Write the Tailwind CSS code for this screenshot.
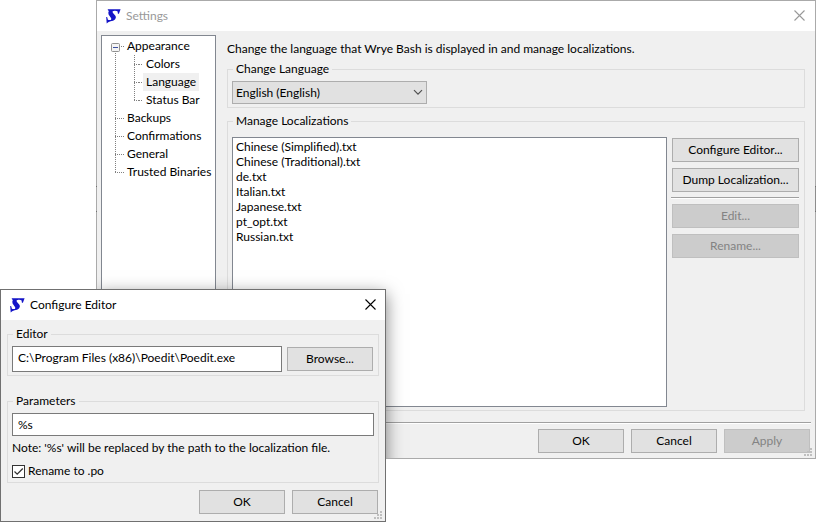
<!DOCTYPE html>
<html lang="en">
<head>
<meta charset="utf-8">
<meta name="viewport" content="width=device-width, initial-scale=1">
<title>Settings</title>
<script src="https://cdn.jsdelivr.net/npm/@tailwindcss/browser@4"></script>
</head>
<body class="bg-white text-black text-[12px] leading-4 font-['Lato','Open_Sans',sans-serif]">
<svg class="hidden" aria-hidden="true">
  <symbol id="logo" viewBox="0 0 15 15"><path fill="#1414c8" d="M1.800 .3H14.600L12.900 4.800H11.900L11.600 2.600Q10.800 1.600 8.600 1.700L6.600 2.200L6.800 3.800L9.600 7Q10.400 9 9 10.400Q7.400 11.800 4.600 12.200L2.200 13.200L.7 14.600L.2 8H1.100L1.900 10.700Q3.200 11.400 4.800 10.900Q5.800 10.300 5 9L2.600 5.600Q1.900 3.800 2.800 1.900L1.800 1.100Z"/></symbol>
  <symbol id="close" viewBox="0 0 11 11"><path fill="none" stroke="currentColor" stroke-width="1.1" d="M.5 .5L10.5 10.5M10.5 .5L.5 10.5"/></symbol>
  <symbol id="grip" viewBox="0 0 8 8"><path fill="#bfbfbf" d="M6 0h2v2h-2zM6 3h2v2h-2zM6 6h2v2h-2zM3 3h2v2h-2zM3 6h2v2h-2zM0 6h2v2h-2z"/></symbol>
</svg>
<main class="relative min-h-screen">

  <!-- Settings window -->
  <section class="relative ml-24 overflow-hidden border border-[#aaaaaa] bg-[#f0f0f0]" aria-label="Settings">
    <header class="flex h-[30px] items-center bg-white pl-[9px] pr-[10px] text-[#999999]">
      <svg class="size-[15px]" aria-hidden="true"><use href="#logo"/></svg>
      <h1 class="ml-[5px] flex-1">Settings</h1>
      <button type="button" class="pb-px" aria-label="Close settings"><svg class="block size-[11px]"><use href="#close"/></svg></button>
    </header>

    <div class="flex px-1 pt-1">
      <nav class="relative w-[115px] shrink-0 border border-[#828790] bg-white pt-px pl-[22px]" aria-label="Pages">
        <svg class="absolute left-[9px] top-[7px] h-[134px] w-[28px]" viewBox="0 0 28 134" aria-hidden="true">
          <g fill="none" stroke="#808080" stroke-dasharray="1 1">
            <path d="M4.5 10V130M4 75.500H13M4 93.500H13M4 111.500H13M4 129.500H13M10 3.500H13"/>
            <path d="M23.500 12V58M23 21.500H32M23 39.500H32M23 57.500H32"/>
          </g>
          <rect x=".5" y=".5" width="8" height="8" rx="1" fill="#f4f4f4" stroke="#919191"/>
          <path d="M2 4.500H7" stroke="#3c50a0"/>
        </svg>
        <svg class="absolute left-[37px] top-[28px] h-[38px] w-[4px]" viewBox="0 0 4 38" aria-hidden="true">
          <path d="M0 .5H4M0 18.500H4M0 36.500H4" stroke="#808080" stroke-dasharray="1 1"/>
        </svg>
        <ul class="leading-[18px] whitespace-nowrap">
          <li><a href="#appearance" class="px-[3px]">Appearance</a>
            <ul class="pl-[19px]">
              <li><a href="#colors" class="px-[3px]">Colors</a></li>
              <li class="flex"><a href="#language" aria-current="page" class="bg-[#f0f0f0] px-[3px]">Language</a></li>
              <li><a href="#status-bar" class="px-[3px]">Status Bar</a></li>
            </ul>
          </li>
          <li><a href="#backups" class="px-[3px]">Backups</a></li>
          <li><a href="#confirmations" class="px-[3px]">Confirmations</a></li>
          <li><a href="#general" class="px-[3px]">General</a></li>
          <li><a href="#trusted-binaries" class="px-[3px]">Trusted Binaries</a></li>
        </ul>
      </nav>

      <div class="min-w-0 flex-1 pl-[11px] pr-[6px] pt-[6px]">
        <p>Change the language that Wrye Bash is displayed in and manage localizations.</p>
        <fieldset class="mt-1 border border-[#dcdcdc] px-1 pb-[3px]">
          <legend class="ml-px px-[3px]"><label for="language-choice">Change Language</label></legend>
          <div class="relative mt-1 w-[195px]">
            <select id="language-choice" class="block h-[23px] w-full appearance-none border border-[#adadad] bg-[#e1e1e1] px-[3px]">
              <option>English (English)</option>
            </select>
            <svg class="pointer-events-none absolute right-1 top-2 h-[7px] w-[10px]" viewBox="0 0 10 7" fill="none" stroke="#505050" stroke-width="1.2" aria-hidden="true"><path d="M1 1.200L5 5.200L9 1.200"/></svg>
          </div>
        </fieldset>
        <fieldset class="mt-[5px] border border-[#dcdcdc] pl-1 pr-[5px] pb-[3px]">
          <legend class="ml-px px-[3px]"><label for="localizations">Manage Localizations</label></legend>
          <div class="flex pt-2">
            <select id="localizations" size="17" class="h-[270px] min-w-0 flex-1 overflow-hidden border border-[#828790] bg-white pt-px">
              <option class="h-[15px] min-h-0 p-0 pl-[3px] leading-[15px]">Chinese (Simplified).txt</option>
              <option class="h-[15px] min-h-0 p-0 pl-[3px] leading-[15px]">Chinese (Traditional).txt</option>
              <option class="h-[15px] min-h-0 p-0 pl-[3px] leading-[15px]">de.txt</option>
              <option class="h-[15px] min-h-0 p-0 pl-[3px] leading-[15px]">Italian.txt</option>
              <option class="h-[15px] min-h-0 p-0 pl-[3px] leading-[15px]">Japanese.txt</option>
              <option class="h-[15px] min-h-0 p-0 pl-[3px] leading-[15px]">pt_opt.txt</option>
              <option class="h-[15px] min-h-0 p-0 pl-[3px] leading-[15px]">Russian.txt</option>
            </select>
            <div class="ml-1 flex w-[128px] flex-col pt-px">
              <button type="button" class="ml-px h-6 border border-[#adadad] bg-[#e1e1e1]">Configure Editor...</button>
              <button type="button" class="ml-px mt-[6px] h-6 border border-[#adadad] bg-[#e1e1e1]">Dump Localization...</button>
              <hr class="mt-[5px] h-[2px] border-t border-b border-t-[#a0a0a0] border-b-white">
              <button type="button" disabled class="ml-px mt-[5px] h-6 border border-[#bfbfbf] bg-[#cccccc] text-[#838383]">Edit...</button>
              <button type="button" disabled class="ml-px mt-[6px] h-6 border border-[#bfbfbf] bg-[#cccccc] text-[#838383]">Rename...</button>
            </div>
          </div>
        </fieldset>
      </div>
    </div>

    <footer class="px-1 pb-[5px] pt-[11px]">
      <hr class="h-[2px] border-t border-b border-t-[#a0a0a0] border-b-white">
      <div class="flex justify-end gap-[7px] pr-px pt-[5px]">
        <button type="button" class="h-6 w-[86px] border border-[#adadad] bg-[#e1e1e1]">OK</button>
        <button type="button" class="h-6 w-[86px] border border-[#adadad] bg-[#e1e1e1]">Cancel</button>
        <button type="button" disabled class="h-6 w-[86px] border border-[#bfbfbf] bg-[#cccccc] text-[#838383]">Apply</button>
      </div>
    </footer>
    <svg class="absolute bottom-[2px] right-[3px] size-2" aria-hidden="true"><use href="#grip"/></svg>
    <!-- Shadow that the dialog casts on this window -->
    <div class="absolute left-0 top-[290px] h-[232px] w-[289px] shadow-[0_3px_16px_rgba(0,0,0,0.5)]"></div>
  </section>

  <!-- Dark marks on the window's side borders -->
  <div class="absolute left-24 top-[186px] h-[26px] w-px border-y border-[#707070]"></div>
  <div class="absolute right-0 top-[186px] h-[26px] w-px border-y border-[#707070] bg-[#8c8c8c]"></div>

  <!-- Configure Editor dialog -->
  <section class="absolute left-0 top-[289px] w-[386px] border border-[#707070] bg-[#f0f0f0]" role="dialog" aria-label="Configure Editor">
    <header class="flex h-[30px] items-center bg-white pl-[9px] pr-[9px]">
      <svg class="size-[15px]" aria-hidden="true"><use href="#logo"/></svg>
      <h2 class="ml-[5px] flex-1">Configure Editor</h2>
      <button type="button" class="pb-px" aria-label="Close dialog"><svg class="block size-[11px]"><use href="#close"/></svg></button>
    </header>
    <form class="px-[6px] pb-[7px] pt-[6px]">
      <fieldset class="border border-[#dcdcdc] px-1 pb-[3px]">
        <legend class="ml-px px-[3px]"><label for="editor-path">Editor</label></legend>
        <div class="flex items-center gap-[5px] pr-px pt-1">
          <input id="editor-path" type="text" value="C:\Program Files (x86)\Poedit\Poedit.exe" class="h-[26px] min-w-0 flex-1 border border-[#7a7a7a] bg-white px-[5px] pb-[3px]">
          <button type="button" class="h-6 w-[86px] border border-[#adadad] bg-[#e1e1e1]">Browse...</button>
        </div>
      </fieldset>
      <fieldset class="mt-[17px] border border-[#dcdcdc] px-1 pb-[3px]">
        <legend class="ml-px px-[3px]"><label for="parameters">Parameters</label></legend>
        <input id="parameters" type="text" value="%s" class="mt-1 block h-[23px] w-full border border-[#7a7a7a] bg-white px-[5px]">
        <p class="mt-1">Note: '%s' will be replaced by the path to the localization file.</p>
        <label class="mt-[7px] flex items-center gap-[3px]">
          <span class="relative size-[13px]">
            <input type="checkbox" checked class="peer block size-[13px] appearance-none border border-[#333333] bg-white">
            <svg class="pointer-events-none absolute left-0 top-0 hidden size-[13px] peer-checked:block" viewBox="0 0 13 13" fill="none" stroke="#333333" stroke-width="1.300" aria-hidden="true"><path d="M2.500 6.500L5.200 9.200L10.800 3.500"/></svg>
          </span>
          Rename to .po
        </label>
      </fieldset>
      <div class="mt-[7px] flex justify-end gap-[7px] pr-px">
        <button type="button" class="h-6 w-[86px] border border-[#adadad] bg-[#e1e1e1]">OK</button>
        <button type="button" class="h-6 w-[86px] border border-[#adadad] bg-[#e1e1e1]">Cancel</button>
      </div>
    </form>
    <svg class="absolute bottom-[2px] right-[3px] size-2" aria-hidden="true"><use href="#grip"/></svg>
  </section>
</main>
</body>
</html>
